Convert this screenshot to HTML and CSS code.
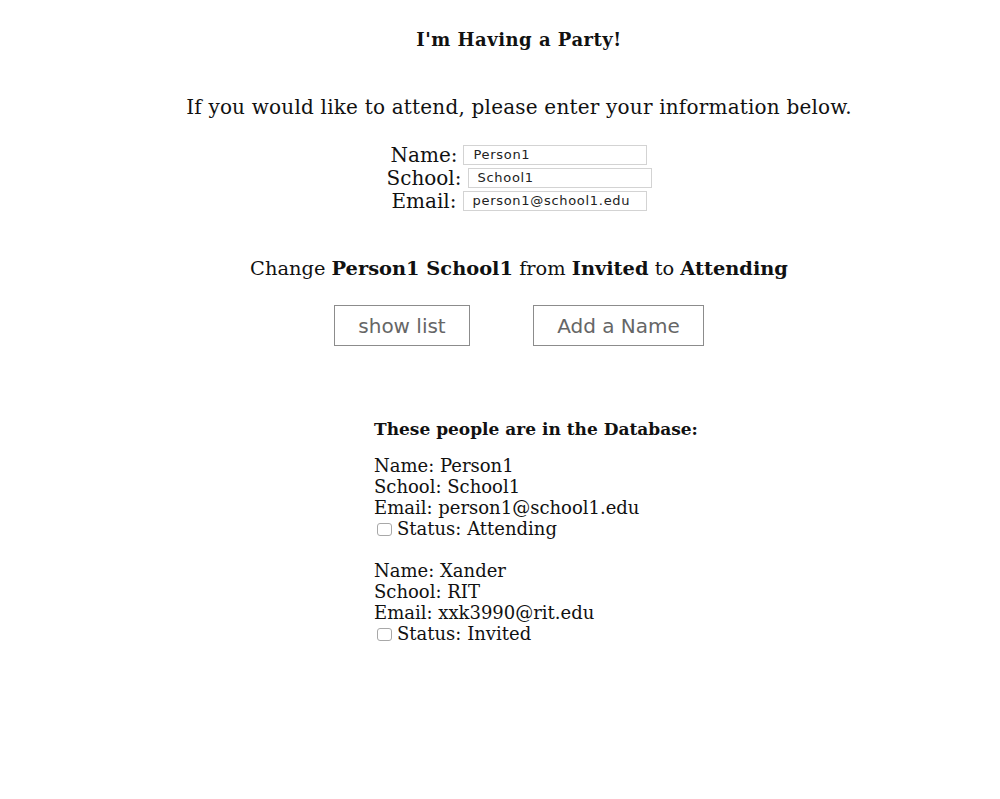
FILE: index.html
```html
<!DOCTYPE html>
<html>
<head>
<meta charset="utf-8">
<title>Party</title>
<link rel="stylesheet" href="styles.css">
</head>
<body>
<div class="page">
  <h1 class="title">I'm Having a Party!</h1>
  <p class="intro">If you would like to attend, please enter your information below.</p>
  <form class="form">
    <div class="row"><label>Name:</label><input class="field" type="text" value="Person1"></div>
    <div class="row"><label>School:</label><input class="field" type="text" value="School1"></div>
    <div class="row"><label>Email:</label><input class="field" type="text" value="person1@school1.edu"></div>
  </form>
  <p class="change">Change <b>Person1 School1</b> from <b>Invited</b> to <b>Attending</b></p>
  <div class="buttons">
    <button class="btn btn-show" type="button">show list</button>
    <button class="btn btn-add" type="button">Add a Name</button>
  </div>
  <div class="db">
    <h2 class="db-title">These people are in the Database:</h2>
    <div class="entry">
      <div>Name: Person1</div>
      <div>School: School1</div>
      <div>Email: person1@school1.edu</div>
      <div class="status"><input type="checkbox" class="check">Status: Attending</div>
    </div>
    <div class="entry">
      <div>Name: Xander</div>
      <div>School: RIT</div>
      <div>Email: xxk3990@rit.edu</div>
      <div class="status"><input type="checkbox" class="check">Status: Invited</div>
    </div>
  </div>
</div>
</body>
</html>
```
FILE: styles.css
```css
html, body {
  margin: 0;
  padding: 0;
  background: #fff;
}
.page {
  padding-left: 38px;
  font-family: "DejaVu Serif", serif;
  color: #111;
  text-align: center;
}
.title {
  margin: 30px 0 0;
  font-size: 18px;
  line-height: 20px;
  font-weight: bold;
  letter-spacing: 0.5px;
}
.intro {
  margin: 45px 0 0;
  font-size: 20px;
  line-height: 24px;
  letter-spacing: 0.2px;
}
.form {
  margin: 24px 0 0;
  display: flex;
  flex-direction: column;
}
.row {
  height: 23px;
  display: flex;
  align-items: center;
  justify-content: center;
  gap: 6px;
  font-size: 20px;
}
.field {
  box-sizing: border-box;
  width: 184px;
  height: 20px;
  margin: 0;
  padding: 0 9px;
  border: 1px solid #d3d3d3;
  font-family: "DejaVu Sans", sans-serif;
  font-size: 13px;
  letter-spacing: 0.7px;
  color: #222;
  background: #fff;
  outline: none;
}
.change {
  margin: 45px 0 0;
  font-size: 19.4px;
  line-height: 24px;
}
.buttons {
  margin-top: 24px;
  display: flex;
  justify-content: center;
  gap: 63px;
}
.btn {
  box-sizing: border-box;
  height: 41px;
  margin: 0;
  padding: 0;
  background: #fff;
  border: 1px solid #8c8c8c;
  border-radius: 0;
  font-family: "DejaVu Sans", sans-serif;
  font-size: 20px;
  color: #666;
}
.btn-show { width: 136px; }
.btn-add { width: 171px; }
.db {
  width: 290px;
  margin: 73px auto 0;
  text-align: left;
}
.db-title {
  margin: 0;
  font-size: 17px;
  line-height: 20px;
  font-weight: bold;
  white-space: nowrap;
}
.entry {
  margin-top: 16px;
  font-size: 18px;
  line-height: 21px;
}
.entry + .entry {
  margin-top: 21px;
}
.status {
  display: flex;
  align-items: center;
}
.check {
  appearance: none;
  -webkit-appearance: none;
  box-sizing: border-box;
  width: 15px;
  height: 13px;
  margin: 1px 5px 0 3px;
  border: 1px solid #a8a8a8;
  border-radius: 3px;
  background: #fff;
}
```
